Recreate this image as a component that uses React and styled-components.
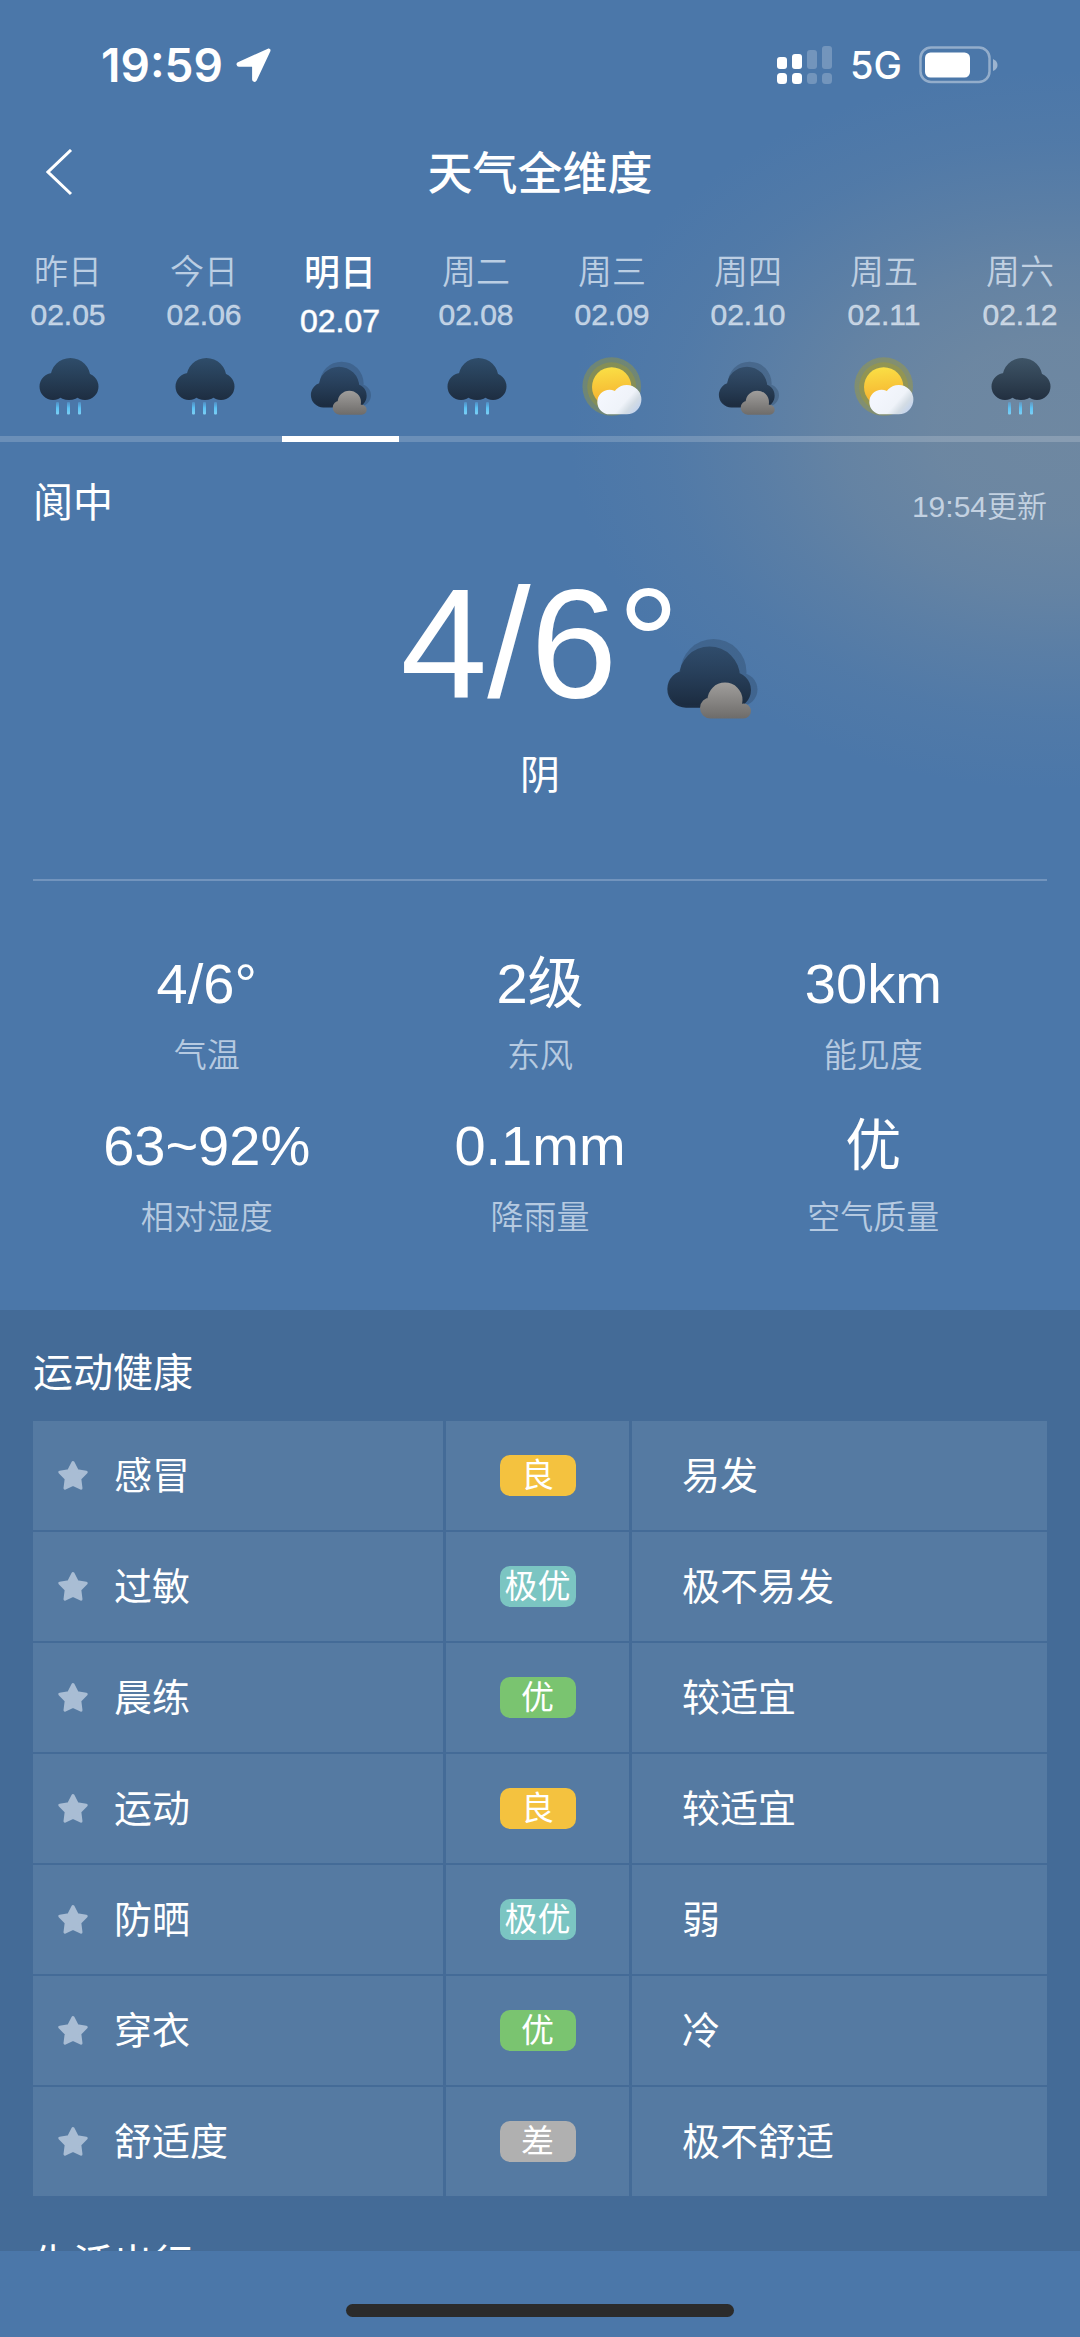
import React from "react";
import styled, { createGlobalStyle } from "styled-components";

const GlobalStyle = createGlobalStyle`
  *, *::before, *::after { box-sizing: border-box; }
  body {
    margin: 0;
    background: #4b77a9;
    color: #fff;
    font-family: "Liberation Sans", "Noto Sans CJK SC", sans-serif;
    -webkit-font-smoothing: antialiased;
  }
  h1, h2, p, dl, dt, dd { margin: 0; font-weight: inherit; }
  button { font: inherit; color: inherit; background: none; border: 0; padding: 0; cursor: pointer; }
`;

const Screen = styled.div`
  display: flex;
  flex-direction: column;
  height: 100vh;
  background:
    radial-gradient(490px 360px at 98% 430px,
      rgba(111, 136, 161, 0.98) 0%,
      rgba(111, 136, 161, 0.92) 25%,
      rgba(111, 136, 161, 0.7) 45%,
      rgba(111, 136, 161, 0.42) 62%,
      rgba(111, 136, 161, 0.16) 80%,
      rgba(111, 136, 161, 0) 100%),
    #4b77a9;
`;

const StatusBar = styled.div`
  display: flex;
  align-items: center;
  justify-content: space-between;
  height: 130px;
  padding: 0 81px 0 101px;
  font-family: Inter, sans-serif;
`;

const StatusGroup = styled.div`
  display: flex;
  align-items: center;
  gap: ${(p) => p.$gap}px;
`;

const Clock = styled.time`
  font-size: 46px;
  line-height: 56px;
  font-weight: 600;
`;

const Network = styled.span`
  font-size: 38px;
  line-height: 48px;
  font-weight: 500;
`;

const NavBar = styled.header`
  display: grid;
  grid-template-columns: 80px 1fr 80px;
  align-items: center;
  height: 86px;
  padding: 0 20px;
`;

const BackButton = styled.button`
  display: grid;
  place-items: center;
  height: 80px;
`;

const PageTitle = styled.h1`
  padding-top: 4px;
  text-align: center;
  font-size: 45px;
  line-height: 64px;
  font-weight: 500;
`;

const Body = styled.main`
  flex: 1;
  min-height: 0;
  overflow: hidden auto;
  scrollbar-width: none;
`;

const DayStrip = styled.nav`
  display: flex;
  overflow: auto hidden;
  scrollbar-width: none;
`;

const DayTab = styled.button`
  flex: 0 0 136px;
  display: flex;
  flex-direction: column;
  align-items: center;
  height: 226px;
  padding-top: 32px;
  color: ${(p) => (p.$active ? "#fff" : "rgba(225, 235, 247, 0.75)")};
`;

const DayName = styled.span`
  font-size: ${(p) => (p.$active ? 36 : 34)}px;
  line-height: ${(p) => (p.$active ? 52 : 48)}px;
  font-weight: ${(p) => (p.$active ? 500 : 350)};
`;

const DayDate = styled.span`
  margin-top: 3px;
  font-size: ${(p) => (p.$active ? 32 : 30)}px;
  line-height: ${(p) => (p.$active ? 36 : 32)}px;
  -webkit-text-stroke: 1px rgba(255, 255, 255, ${(p) => (p.$active ? 0.65 : 0.32)});
`;

const DayIcon = styled.span`
  display: block;
  height: 60px;
  margin: auto 0 19px 2px;
`;

const Track = styled.span`
  display: flex;
  justify-content: center;
  width: 100%;
  height: 6px;
  background: rgba(255, 255, 255, 0.18);
`;

const Marker = styled.span`
  width: 117px;
  background: #fff;
`;

const PlaceRow = styled.div`
  display: flex;
  align-items: baseline;
  justify-content: space-between;
  padding: 33px 33px 0;
  line-height: 56px;
`;

const Place = styled.h2`
  font-size: 40px;
`;

const Updated = styled.span`
  font-size: 30px;
  font-weight: 350;
  color: rgba(225, 235, 247, 0.75);
`;

const Hero = styled.section`
  display: flex;
  flex-direction: column;
  align-items: center;
  margin: 0 33px;
  padding: 30px 0 76px;
  border-bottom: 2px solid #7294bd;
`;

const HeroTemp = styled.p`
  position: relative;
  font-size: 156px;
  line-height: 156px;
`;

const HeroIcon = styled.span`
  position: absolute;
  left: calc(100% - 14px);
  top: 73px;
  line-height: 0;
`;

const Condition = styled.p`
  margin-top: 26px;
  font-size: 40px;
  line-height: 56px;
`;

const Stats = styled.dl`
  display: grid;
  grid-template-columns: repeat(3, 1fr);
  row-gap: 30px;
  padding: 67px 40px 68px;
  text-align: center;
`;

const Stat = styled.div`
  display: flex;
  flex-direction: column-reverse;
  gap: 12px;
`;

const StatValue = styled.dd`
  font-size: 56px;
  line-height: 72px;
`;

const StatLabel = styled.dt`
  font-size: 33px;
  line-height: 48px;
  font-weight: 350;
  color: rgba(225, 235, 247, 0.72);
`;

const IndexPanel = styled.div`
  background: #446b97;
  padding-bottom: 38px;
`;

const IndexSection = styled.section`
  padding: ${(p) => (p.$first ? 35 : 38)}px 33px 0;
`;

const IndexTitle = styled.h2`
  margin-bottom: 20px;
  font-size: 40px;
  line-height: 56px;
`;

const IndexTable = styled.table`
  width: 100%;
  table-layout: fixed;
  border-collapse: separate;
  border-spacing: 0;
  font-size: 38px;
  line-height: 56px;
`;

const Cell = styled.td`
  height: 111px;
  padding: 0 0 0 ${(p) => p.$indent || 0}px;
  width: ${(p) => p.$width || "auto"};
  text-align: ${(p) => (p.$center ? "center" : "left")};
  font-weight: 400;
  background: #557aa2;
  background-clip: padding-box;
  border: 0 solid transparent;
  border-right-width: ${(p) => (p.$last ? 0 : 3)}px;
  border-bottom-width: 2px;
`;

const IndexName = styled.span`
  display: flex;
  align-items: center;
  gap: 25px;
`;

const Badge = styled.span`
  display: block;
  width: 76px;
  margin: 0 auto;
  border-radius: 10px;
  font-size: 33px;
  line-height: 41px;
  text-align: center;
  background: ${(p) => p.$color};
`;

const Footer = styled.footer`
  flex: none;
  display: flex;
  justify-content: center;
  align-items: flex-end;
  height: 86px;
  padding-bottom: 20px;
  background: #4b77a9;
`;

const HomeBar = styled.div`
  width: 36%;
  height: 13px;
  border-radius: 7px;
  background: #2b2b2b;
`;

const circle = (x, y, r) =>
  `M${x - r} ${y}a${r} ${r} 0 1 1 ${2 * r} 0a${r} ${r} 0 1 1 ${-2 * r} 0z`;
const box = (x, y, w, h) => `M${x} ${y}h${w}v${h}h${-w}z`;

function RainIcon({ id }) {
  return (
    <svg width="62" height="60" viewBox="0 0 62 60" aria-hidden="true">
      <defs>
        <linearGradient id={`${id}c`} x1="0" y1="0" x2="0" y2="1">
          <stop offset="0" stopColor="rgb(23,41,53)" stopOpacity="0.54" />
          <stop offset="1" stopColor="rgb(22,33,48)" stopOpacity="0.86" />
        </linearGradient>
        <linearGradient id={`${id}d`} gradientUnits="userSpaceOnUse" x1="0" y1="44" x2="0" y2="58">
          <stop offset="0" stopColor="#5aaee8" stopOpacity="0.3" />
          <stop offset="0.5" stopColor="#5cc3f5" />
          <stop offset="1" stopColor="#80d0f4" />
        </linearGradient>
      </defs>
      <path
        fill={`url(#${id}c)`}
        d={circle(32.4, 21, 20) + circle(15, 29.5, 13.5) + circle(47, 29.5, 13.5) + circle(31, 25.5, 17.5)}
      />
      {[18, 29, 40].map((x) => (
        <rect key={x} x={x} y="45" width="3" height="12.5" rx="1" fill={`url(#${id}d)`} />
      ))}
    </svg>
  );
}

function OvercastIcon({ id, large }) {
  return (
    <svg
      width={large ? 93 : 62}
      height={large ? 84 : 60}
      viewBox={large ? "0 0 93 84" : "0 -6 93 90"}
      aria-hidden="true"
    >
      <defs>
        <linearGradient id={`${id}f`} x1="0" y1="0" x2="0" y2="1">
          <stop offset="0" stopColor="rgb(33,54,76)" stopOpacity="0.52" />
          <stop offset="1" stopColor="rgb(22,35,52)" stopOpacity="0.9" />
        </linearGradient>
        <linearGradient id={`${id}g`} x1="0" y1="0" x2="0" y2="1">
          <stop offset="0" stopColor="#a09e9c" />
          <stop offset="1" stopColor="#6e6c6a" />
        </linearGradient>
      </defs>
      <path
        fill="rgba(40,64,92,0.33)"
        d={circle(47.5, 34, 33) + circle(19, 50, 17) + circle(75, 51.5, 16.5) + box(19, 40, 56, 27)}
      />
      <path
        fill={`url(#${id}f)`}
        d={circle(43.5, 39, 30.5) + circle(20, 51, 18.7) + circle(67, 52, 18) + box(20, 42, 47, 27.7)}
      />
      <path
        fill={`url(#${id}g)`}
        d={circle(59, 62, 17.5) + circle(44.5, 70, 10.5) + circle(77.5, 73, 7.5) + box(44.5, 66, 33, 14.5)}
      />
    </svg>
  );
}

function SunCloudIcon({ id }) {
  return (
    <svg width="62" height="60" viewBox="0 0 62 60" aria-hidden="true">
      <defs>
        <linearGradient id={`${id}s`} x1="0.4" y1="0" x2="0.5" y2="1">
          <stop offset="0" stopColor="#fadf45" />
          <stop offset="1" stopColor="#f5ab2c" />
        </linearGradient>
        <linearGradient id={`${id}w`} gradientUnits="userSpaceOnUse" x1="24" y1="34" x2="56" y2="62">
          <stop offset="0" stopColor="#f4f7fe" />
          <stop offset="0.5" stopColor="#eff3f9" />
          <stop offset="0.68" stopColor="#d3dce4" />
          <stop offset="0.85" stopColor="#c3d3ec" />
          <stop offset="1" stopColor="#a9c2e2" />
        </linearGradient>
      </defs>
      <circle cx="29.7" cy="29.5" r="29.3" fill="#c0a800" fillOpacity="0.3" />
      <circle cx="29.7" cy="29.8" r="24.5" fill="#c0a800" fillOpacity="0.26" />
      <circle cx="29.7" cy="30" r="19.7" fill={`url(#${id}s)`} />
      <path
        fill={`url(#${id}w)`}
        d={circle(27.6, 45, 12.3) + circle(44.7, 42.6, 14.7) + box(27.6, 44, 17.1, 13.3)}
      />
    </svg>
  );
}

function StarIcon() {
  return (
    <svg width="32" height="32" viewBox="0 0 32 32" aria-hidden="true">
      <path
        d="M16 2.5 20.2 10.7 29.2 12.2 22.8 18.8 24 28.2 16 24.4 8 28.2 9.2 18.8 2.8 12.2 11.8 10.7z"
        fill="#a9bdd4"
        stroke="#a9bdd4"
        strokeWidth="3"
        strokeLinejoin="round"
      />
    </svg>
  );
}

function LocationArrow() {
  return (
    <svg width="36" height="36" viewBox="0 0 36 36" aria-hidden="true">
      <path
        d="M32.5 3 2.5 16.5a.9.9 0 0 0 .4 1.7H16.8a.8.8 0 0 1 .8.8V32.5a.9.9 0 0 0 1.7.4L33 3.5a.4.4 0 0 0-.5-.5z"
        fill="#fff"
        stroke="#fff"
        strokeWidth="3"
        strokeLinejoin="round"
      />
    </svg>
  );
}

function SignalIcon() {
  const bars = [
    [0, 11, 12, 1],
    [15, 8, 15, 1],
    [30, 4, 19, 0.22],
    [45, 0, 23, 0.22],
  ];
  return (
    <svg width="56" height="39" viewBox="0 0 56 39" fill="#fff" aria-label="信号">
      {bars.map(([x, y, h, o]) => (
        <g key={x} opacity={o}>
          <rect x={x} y={y} width="10" height={h} rx="3" />
          <rect x={x} y="27" width="10" height="11" rx="3.5" />
        </g>
      ))}
    </svg>
  );
}

function BatteryIcon() {
  return (
    <svg width="80" height="38" viewBox="0 0 80 38" aria-label="电量">
      <rect x="1.5" y="1.5" width="69" height="34.5" rx="10.5" fill="none" stroke="#fff" strokeOpacity="0.4" strokeWidth="2.5" />
      <rect x="6" y="6.5" width="45" height="25" rx="5.5" fill="#fff" />
      <path d="M74 13q4.5 2 4.5 6t-4.5 6z" fill="#fff" fillOpacity="0.45" />
    </svg>
  );
}

function BackIcon() {
  return (
    <svg width="28" height="48" viewBox="0 0 28 48" fill="none" stroke="#fff" strokeWidth="3" aria-hidden="true">
      <path d="M25 1 2 23l23 22" />
    </svg>
  );
}

const icons = { rain: RainIcon, overcast: OvercastIcon, sun: SunCloudIcon };

const days = [
  ["昨日", "02.05", "rain"],
  ["今日", "02.06", "rain"],
  ["明日", "02.07", "overcast"],
  ["周二", "02.08", "rain"],
  ["周三", "02.09", "sun"],
  ["周四", "02.10", "overcast"],
  ["周五", "02.11", "sun"],
  ["周六", "02.12", "rain"],
];

const stats = [
  ["气温", "4/6°"],
  ["东风", "2级"],
  ["能见度", "30km"],
  ["相对湿度", "63~92%"],
  ["降雨量", "0.1mm"],
  ["空气质量", "优"],
];

const levelColors = { 良: "#f4c23f", 极优: "#7bc5c2", 优: "#7ac470", 差: "#b0b0b0" };

const health = [
  ["感冒", "良", "易发"],
  ["过敏", "极优", "极不易发"],
  ["晨练", "优", "较适宜"],
  ["运动", "良", "较适宜"],
  ["防晒", "极优", "弱"],
  ["穿衣", "优", "冷"],
  ["舒适度", "差", "极不舒适"],
];

export default function App() {
  return (
    <Screen lang="zh-CN">
      <GlobalStyle />
      <StatusBar>
        <StatusGroup $gap={13}>
          <Clock>19:59</Clock>
          <LocationArrow />
        </StatusGroup>
        <StatusGroup $gap={17}>
          <SignalIcon />
          <Network>5G</Network>
          <BatteryIcon />
        </StatusGroup>
      </StatusBar>

      <NavBar>
        <BackButton type="button" aria-label="返回">
          <BackIcon />
        </BackButton>
        <PageTitle>天气全维度</PageTitle>
      </NavBar>

      <Body>
        <DayStrip aria-label="日期">
          {days.map(([name, date, kind], i) => {
            const active = i === 2;
            const Icon = icons[kind];
            return (
              <DayTab key={date} type="button" $active={active} aria-pressed={active}>
                <DayName $active={active}>{name}</DayName>
                <DayDate $active={active}>{date}</DayDate>
                <DayIcon>
                  <Icon id={`day${i}`} />
                </DayIcon>
                <Track>{active && <Marker />}</Track>
              </DayTab>
            );
          })}
        </DayStrip>

        <PlaceRow>
          <Place>阆中</Place>
          <Updated>19:54更新</Updated>
        </PlaceRow>

        <Hero>
          <HeroTemp>
            4/6°
            <HeroIcon>
              <OvercastIcon id="hero" large />
            </HeroIcon>
          </HeroTemp>
          <Condition>阴</Condition>
        </Hero>

        <Stats>
          {stats.map(([label, value]) => (
            <Stat key={label}>
              <StatLabel>{label}</StatLabel>
              <StatValue>{value}</StatValue>
            </Stat>
          ))}
        </Stats>

        <IndexPanel>
          <IndexSection $first>
            <IndexTitle>运动健康</IndexTitle>
            <IndexTable>
              <tbody>
                {health.map(([name, level, advice]) => (
                  <tr key={name}>
                    <Cell as="th" scope="row" $indent={24} $width="413px">
                      <IndexName>
                        <StarIcon />
                        {name}
                      </IndexName>
                    </Cell>
                    <Cell $center $width="186px">
                      <Badge $color={levelColors[level]}>{level}</Badge>
                    </Cell>
                    <Cell $indent={50} $last>
                      {advice}
                    </Cell>
                  </tr>
                ))}
              </tbody>
            </IndexTable>
          </IndexSection>
          <IndexSection>
            <IndexTitle>生活出行</IndexTitle>
          </IndexSection>
        </IndexPanel>
      </Body>

      <Footer>
        <HomeBar />
      </Footer>
    </Screen>
  );
}
